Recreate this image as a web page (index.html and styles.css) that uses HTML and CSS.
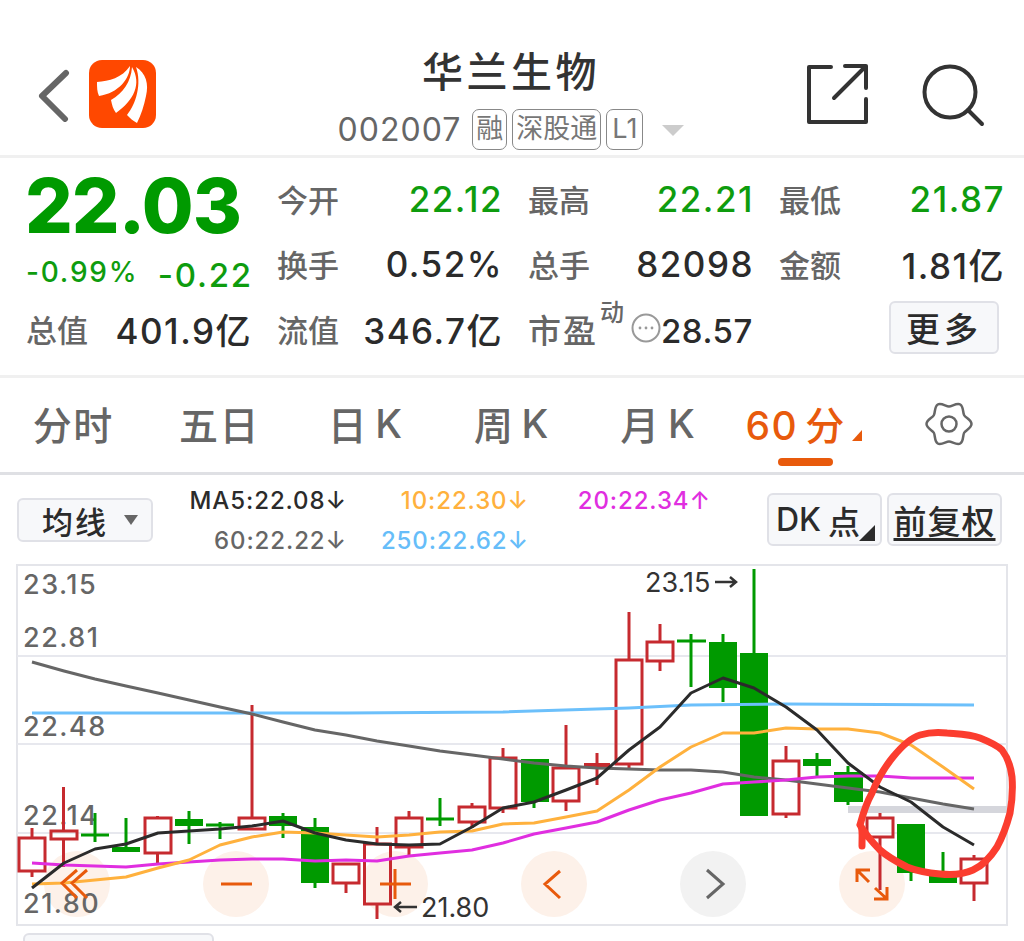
FILE: index.html
```html
<!DOCTYPE html>
<html lang="zh-CN">
<head>
<meta charset="utf-8">
<title>华兰生物</title>
<link rel="stylesheet" href="styles.css">
</head>
<body>
<div class="page">
  <header class="header">
    <svg class="back" viewBox="0 0 34 54" width="34" height="54"><path d="M28 5 4 28l23 23"/></svg>
    <svg class="logo" viewBox="0 0 67 68" width="67" height="68">
      <rect width="67" height="68" rx="13" fill="#ff4800"/>
      <path fill="#fff" d="M8 22C20 21 33 18 41 6 41 18 30 33 10 36 8 32 8 27 8 22Z"/>
      <path fill="#fff" d="M43 7C53 24 45 40 27 53 24 49 23 45 22 40 34 33 42 22 43 7Z"/>
      <path fill="#fff" d="M47 7C57 13 60 24 57 36 55 46 52 55 48 63 44 61 41 58 38 55 47 44 53 24 47 7Z"/>
    </svg>
    <div class="identity">
      <h1 class="name">华兰生物</h1>
      <div class="code-row">
        <span class="code">002007</span>
        <span class="badge">融</span>
        <span class="badge">深股通</span>
        <span class="badge badge-wide">L1</span>
        <span class="caret"></span>
      </div>
    </div>
    <svg class="share" viewBox="0 0 64 64" width="64" height="64"><path d="M25 4H3v55h57V36M28 35 60 3M39 3h21v22"/></svg>
    <svg class="search" viewBox="0 0 64 64" width="64" height="64"><circle cx="29" cy="29" r="25.500"/><path d="m47 47 14 14"/></svg>
  </header>

  <section class="quote">
    <div class="price-cell">
      <div class="price">22.03</div>
      <div class="change"><span class="pct">-0.99%</span><span class="abs">-0.22</span></div>
    </div>
    <div class="stat"><span class="k">今开</span><span class="v down">22.12</span></div>
    <div class="stat"><span class="k">最高</span><span class="v down">22.21</span></div>
    <div class="stat"><span class="k">最低</span><span class="v down">21.87</span></div>
    <div class="stat"><span class="k">换手</span><span class="v">0.52%</span></div>
    <div class="stat"><span class="k">总手</span><span class="v">82098</span></div>
    <div class="stat"><span class="k">金额</span><span class="v">1.81亿</span></div>
    <div class="stat"><span class="k">总值</span><span class="v">401.9亿</span></div>
    <div class="stat"><span class="k">流值</span><span class="v">346.7亿</span></div>
    <div class="stat"><span class="k pe">市盈<sup class="sup">动</sup><svg class="dots" viewBox="0 0 30 30" width="30" height="30"><circle cx="15" cy="15" r="13.500" fill="none" stroke="#999" stroke-width="2"/><circle cx="9" cy="15" r="1.400" fill="#999"/><circle cx="15" cy="15" r="1.400" fill="#999"/><circle cx="21" cy="15" r="1.400" fill="#999"/></svg></span><span class="v v-tight">28.57</span></div>
    <div class="stat more-cell"><button class="more">更多</button></div>
  </section>

  <nav class="tabs">
    <div class="tab">分时</div>
    <div class="tab">五日</div>
    <div class="tab">日<i class="gap"></i>K</div>
    <div class="tab">周<i class="gap"></i>K</div>
    <div class="tab">月<i class="gap"></i>K</div>
    <div class="tab active"><span>60<i class="gap"></i>分</span><i class="corner"></i><b class="underline"></b></div>
    <div class="tab tab-gear">
      <svg class="gear" viewBox="-1 -1 50 50" width="50" height="50"><path d="M46.500 24C46.500 20 40.660 17.850 39.160 15.250 37.660 12.650 38.710 6.510 35.250 4.510 31.790 2.510 27 6.500 24 6.500 21 6.500 16.210 2.510 12.750 4.510 9.290 6.510 10.340 12.650 8.840 15.250 7.340 17.850 1.500 20 1.500 24 1.500 28 7.340 30.150 8.840 32.750 10.340 35.350 9.290 41.490 12.750 43.490 16.210 45.490 21 41.500 24 41.500 27 41.500 31.790 45.490 35.250 43.490 38.710 41.490 37.660 35.350 39.160 32.750 40.660 30.150 46.500 28 46.500 24Z"/><circle cx="24" cy="24" r="7.500"/></svg>
    </div>
  </nav>

  <section class="indicators">
    <button class="select"><span>均线</span><i class="select-caret"></i></button>
    <div class="ma-grid">
      <span class="ma black">MA5:22.08↓</span>
      <span class="ma yellow">10:22.30↓</span>
      <span class="ma magenta">20:22.34↑</span>
      <span class="ma grey">60:22.22↓</span>
      <span class="ma blue">250:22.62↓</span>
    </div>
    <div class="actions">
      <button class="action dk">DK<i class="gap"></i>点<i class="action-corner"></i></button>
      <button class="action"><u>前复权</u></button>
    </div>
  </section>

  <svg class="chart" viewBox="16 564 992 362" width="992" height="362">
    <rect class="frame" x="17" y="565" width="990" height="360"/>
    <path class="grid" d="M17 656H1007M17 744H1007M17 833H1007"/>
    <g class="pads">
      <circle cx="77" cy="884" r="33"/><circle cx="236" cy="884" r="33"/><circle cx="395" cy="884" r="33"/><circle cx="554" cy="884" r="33"/><circle cx="872" cy="884" r="33"/>
    </g>
    <circle class="pad-grey" cx="713" cy="884" r="33"/>
    <g class="axis">
      <text x="23" y="594">23.15</text><text x="23" y="647">22.81</text><text x="23" y="736">22.48</text><text x="23" y="825">22.14</text><text x="23" y="913">21.80</text>
    </g>
    <g class="up">
      <path d="M32 828V838M32 871V877M63.500 787V831M63.500 839V867M157.500 816V818M157.500 853V863M252 705V818M346 883V893M377 827V844M377 904V919M409 811V818M409 847V857M472 803V807M472 822V828M503 748V758M503 808V813M566 725V768M566 801V811M597 753V785M629 612V660M629 764V768M660 624V642M660 661V671M786 746V761M786 814V818M880 813V818M880 837V890M974 855V859M974 883V901"/>
      <rect x="19" y="838" width="26" height="33"/><rect x="51" y="831" width="26" height="8"/><rect x="145" y="818" width="26" height="35"/><rect x="239" y="818" width="26" height="11"/><rect x="333" y="864" width="26" height="19"/><rect x="364.500" y="844" width="26" height="60"/><rect x="396" y="818" width="26" height="29"/><rect x="459" y="807" width="26" height="15"/><rect x="490" y="758" width="26" height="50"/><rect x="553" y="768" width="26" height="33"/><rect x="616" y="660" width="26" height="104"/><rect x="647" y="642" width="26" height="19"/><rect x="773" y="761" width="26" height="53"/><rect x="867" y="818" width="26" height="19"/><rect x="961" y="859" width="26" height="24"/>
      <rect class="solid" x="584" y="763" width="26" height="5"/>
    </g>
    <g class="dn">
      <path d="M95 813V842M81 835H109M126 818V850M189 811V844M206 825H234M220 822V839M283 813V838M315 818V888M440 798V826M426 819H454M534 802V808M691 634V687M677 641H706M723 634V702M754 569V653M817 753V776M848 766V805M911 873V881M943 852V871"/>
      <rect class="solid" x="112" y="847" width="28" height="5"/><rect class="solid" x="175" y="819" width="28" height="7"/><rect class="solid" x="269" y="816" width="28" height="10"/><rect class="solid" x="301" y="827" width="28" height="56"/><rect class="solid" x="521" y="759" width="28" height="43"/><rect class="solid" x="709" y="642" width="28" height="46"/><rect class="solid" x="740" y="653" width="28" height="163"/><rect class="solid" x="803" y="759" width="28" height="7"/><rect class="solid" x="834" y="772" width="29" height="30"/><rect class="solid" x="897" y="824" width="28" height="49"/><rect class="solid" x="929" y="871" width="28" height="12"/>
    </g>
    <rect class="band" x="848" y="806" width="159" height="7"/>
    <path class="line l-blue" d="M32 713H346L503 712 629 708 691 705 786 704 974 705"/>
    <path class="line l-grey" d="M32 662 64 671 95 679 126 686 158 693 189 700 220 707 252 714 283 722 315 730 346 735 377 741 409 746 440 751 472 755 503 759 534 763 566 766 597 768 629 769 660 770 691 770 723 772 754 777 786 780 817 784 848 788 880 792 911 798 943 804 974 809"/>
    <path class="line l-magenta" d="M32 863 64 865 95 866 126 867 158 864 189 862 220 860 252 859 283 859 315 861 346 860 377 861 409 856 440 853 472 850 503 843 534 834 566 828 597 822 629 810 660 800 691 793 723 784 754 782 786 780 817 777 848 776 880 776 911 778 943 778 974 778"/>
    <path class="line l-yellow" d="M32 884 64 883 95 880 126 877 158 868 189 860 220 845 252 837 283 832 315 833 346 835 377 837 409 835 440 832 472 831 503 824 534 823 566 817 597 811 629 790 660 767 691 747 723 733 754 733 786 728 817 729 848 729 880 733 911 745 943 767 974 789"/>
    <path class="line l-black" d="M32 888 64 863 95 849 126 844 158 833 189 831 220 829 252 826 283 821 315 833 346 840 377 844 409 845 440 844 472 827 503 808 534 802 566 790 597 778 629 750 660 727 691 693 723 678 754 688 786 707 817 730 848 763 880 787 911 802 943 827 974 845"/>
    <text class="mark" x="645" y="592">23.15</text>
    <path class="mark-arrow" d="M715 582H736M730 577l6 5-6 5"/>
    <path class="mark-arrow" d="M395 907H417M401 902l-6 5 6 5"/>
    <text class="mark" x="421" y="917">21.80</text>
    <g class="glyph">
      <path d="M77 870 62 883 77 898M87 870 72 883 87 898M221 884H252M380 884H411M395 869V899M560 871 545 884 560 898M869 882 857 870M857 882V870H870M875 888 887 899M887 887V899H874"/>
    </g>
    <path class="glyph-grey" d="M707 870 723 884 707 898"/>
    <path class="loop" d="M862 846C862 832 863 828 860 825 864 810 868 800 872 793 878 778 884 768 893 757 902 746 910 738 920 735 930 732 938 732 947 733 960 734 970 734 980 738 990 742 997 745 1002 750 1008 758 1011 768 1012 777 1013 790 1012 802 1010 813 1006 828 1002 838 997 847 990 858 982 866 973 870 962 875 950 875 940 874 928 873 917 871 907 867 897 862 888 857 880 850 872 842 866 835 860 825"/>
  </svg>

  <div class="stub"></div>
</div>
</body>
</html>
```

FILE: styles.css
```css
* { box-sizing: border-box; }
html, body { margin: 0; padding: 0; background: #fff; }
body { font-family: Inter, "Noto Sans CJK SC", sans-serif; color: #2b2b2b; }
.page { width: 1024px; height: 941px; overflow: hidden; }
button { font-family: inherit; padding: 0; margin: 0; }
i { font-style: normal; }
.gap { display: inline-block; width: 7px; }

/* header */
.header { height: 155px; padding: 46px 0 0; display: grid; grid-template-columns: 38px 34px 17px 67px 1fr 64px 54px 64px 40px; align-items: start; }
.back { grid-column: 2; margin-top: 22px; fill: none; stroke: #666; stroke-width: 6; stroke-linecap: round; stroke-linejoin: round; }
.logo { grid-column: 4; margin-top: 14px; }
.identity { grid-column: 5; display: flex; flex-direction: column; align-items: center; margin-left: 64px; }
.name { margin: 0; font-size: 41px; line-height: 52px; font-weight: 500; letter-spacing: 3.500px; color: #333; }
.code-row { display: flex; align-items: center; gap: 5px; margin-top: 10px; height: 42px; }
.code { font-size: 32px; color: #666; letter-spacing: 1px; margin-right: 6px; }
.badge { height: 41px; padding: 0 3px; border: 1.500px solid #888; border-radius: 7px; font-size: 27px; line-height: 37px; color: #777; }
.badge-wide { padding: 0 5px; }
.caret { width: 0; height: 0; margin-left: 14px; margin-top: 2px; border-left: 11px solid transparent; border-right: 11px solid transparent; border-top: 11px solid #ccc; }
.share { grid-column: 6; margin-top: 17px; margin-left: 4px; fill: none; stroke: #333; stroke-width: 4; stroke-linejoin: round; stroke-linecap: round; }
.search { grid-column: 8; margin-top: 17px; margin-left: 1px; fill: none; stroke: #333; stroke-width: 4; stroke-linecap: round; }

/* quote */
.quote { height: 223px; border-top: 3px solid #f0f0f0; border-bottom: 3px solid #f0f0f0; padding: 8px 0 0 26px; display: grid; grid-template-columns: repeat(4, 224px); grid-template-rows: repeat(3, 65px); column-gap: 27px; }
.price-cell { grid-row: 1 / span 2; grid-column: 1; }
.price { font-size: 75px; line-height: 74px; font-weight: 800; color: #009a00; margin: 3px 0 0 -1px; letter-spacing: -1px; }
.change { display: flex; justify-content: space-between; align-items: flex-end; margin-top: 9px; color: #0e9c0e; }
.pct { font-size: 28px; line-height: 40px; padding-bottom: 5px; letter-spacing: 1.800px; font-weight: 500; }
.abs { font-size: 33px; line-height: 44px; letter-spacing: 1.800px; font-weight: 500; margin-right: -3px; }
.stat { display: flex; justify-content: space-between; align-items: center; }
.stat:nth-child(n+2) { white-space: nowrap; }
.k { font-size: 31px; color: #666; font-weight: 500; }
.v { font-size: 35px; color: #2b2b2b; font-weight: 500; letter-spacing: 1.500px; margin-right: -2px; }
.v.down { color: #0e9c0e; }
.v.v-tight { font-size: 33px; letter-spacing: 0.500px; margin: 5px 0 0; }
.stat:nth-child(2) { grid-column: 2; grid-row: 1; }
.stat:nth-child(3) { grid-column: 3; grid-row: 1; }
.stat:nth-child(4) { grid-column: 4; grid-row: 1; }
.stat:nth-child(5) { grid-column: 2; grid-row: 2; }
.stat:nth-child(6) { grid-column: 3; grid-row: 2; }
.stat:nth-child(7) { grid-column: 4; grid-row: 2; }
.stat:nth-child(8) { grid-column: 1; grid-row: 3; }
.stat:nth-child(9) { grid-column: 2; grid-row: 3; }
.stat:nth-child(10) { grid-column: 3; grid-row: 3; }
.more-cell { grid-column: 4; grid-row: 3; justify-content: flex-end; padding-right: 4px; }
.pe { display: flex; align-items: flex-start; font-size: 33px; letter-spacing: 2px; }
.sup { font-size: 24px; line-height: 24px; margin-top: -4px; margin-left: 2px; letter-spacing: 0; }
.dots { margin-left: 7px; margin-top: 8px; }
.more { width: 110px; height: 53px; margin-top: -3px; background: #f7f8fa; border: 2px solid #e0e1e7; border-radius: 6px; font-size: 34px; letter-spacing: 4px; font-weight: 500; color: #2b2b2b; }

/* tabs */
.tabs { height: 97px; border-bottom: 3px solid #dfe0e4; display: grid; grid-template-columns: repeat(7, 1fr); align-items: center; }
.tab { position: relative; height: 94px; padding-bottom: 4px; display: flex; align-items: center; justify-content: center; font-size: 39px; font-weight: 500; color: #666; letter-spacing: 1.500px; }
.tab.active { color: #e85a0c; padding-right: 2px; }
.tab-gear { padding-right: 3px; padding-bottom: 2px; }
.corner { width: 0; height: 0; margin-left: 6px; margin-top: 24px; border-left: 10px solid transparent; border-bottom: 11px solid #e85a0c; }
.underline { position: absolute; left: 50%; bottom: 6px; width: 55px; height: 8px; margin-left: -27px; background: #e85a0c; border-radius: 4px; }
.gear { fill: none; stroke: #666; stroke-width: 2.500; }

/* indicators */
.indicators { height: 89px; display: grid; grid-template-columns: 136px 557px 1fr; padding: 18px 0 0 17px; }
.select { width: 136px; height: 44px; margin-top: 5px; background: #f7f8fa; border: 2px solid #e0e1e7; border-radius: 6px; display: flex; align-items: center; padding-left: 23px; font-size: 31px; font-weight: 500; letter-spacing: 2px; color: #2b2b2b; }
.select-caret { width: 0; height: 0; margin-left: 16px; border-left: 7px solid transparent; border-right: 7px solid transparent; border-top: 10px solid #666; }
.ma-grid { display: grid; grid-template-columns: repeat(3, 182px); grid-auto-rows: 40px; justify-content: start; margin-top: -12px; padding-left: 12px; }
.ma { font-size: 24px; line-height: 40px; text-align: right; white-space: nowrap; letter-spacing: 0.900px; font-weight: 500; }
.black { color: #2b2b2b; }
.yellow { color: #ffb13d; }
.magenta { color: #e02ee0; }
.grey { color: #666; }
.blue { color: #66bdf9; }
.actions { display: flex; gap: 5px; margin-left: 57px; align-items: flex-start; }
.action { position: relative; flex: none; width: 115px; height: 53px; background: #f7f8fa; border: 2px solid #e0e1e7; border-radius: 6px; font-size: 33px; font-weight: 500; color: #2b2b2b; white-space: nowrap; display: flex; align-items: center; justify-content: center; }
.action.dk { justify-content: flex-start; padding-left: 7px; font-size: 32px; }
.action u { letter-spacing: 1px; text-underline-offset: 4px; }
.action-corner { position: absolute; right: 5px; bottom: 3px; width: 0; height: 0; border-left: 16px solid transparent; border-bottom: 16px solid #2b2b2b; }

/* chart */
.chart { display: block; margin-left: 16px; overflow: visible; }
.frame { fill: #fff; stroke: #e4e5ea; stroke-width: 2; }
.grid { fill: none; stroke: #e7e8ee; stroke-width: 2; }
.pads circle { fill: #fdf1e9; }
.pad-grey { fill: #f2f2f2; }
.axis text { font-size: 27px; fill: #666; letter-spacing: 1.500px; font-weight: 500; }
.up { fill: none; stroke: #c62a2f; stroke-width: 3; }
.up .solid { fill: #c62a2f; stroke: none; }
.dn { fill: none; stroke: #009a00; stroke-width: 3; }
.dn .solid { fill: #009a00; stroke: none; }
.band { fill: #d5d6dc; }
.line { fill: none; stroke-width: 3; stroke-linejoin: round; }
.l-blue { stroke: #6cc0fb; }
.l-grey { stroke: #666; }
.l-magenta { stroke: #e02ee0; }
.l-yellow { stroke: #ffb13d; }
.l-black { stroke: #2b2b2b; }
.mark { font-size: 27px; fill: #333; }
.mark-arrow { fill: none; stroke: #333; stroke-width: 2.500; }
.glyph { fill: none; stroke: #e85a0c; stroke-width: 3; }
.glyph-grey { fill: none; stroke: #666; stroke-width: 3; }
.loop { fill: none; stroke: #fb3d2f; stroke-width: 7; stroke-linejoin: round; stroke-linecap: round; }

.stub { width: 191px; height: 20px; margin: 7px 0 0 23px; background: #f7f8fa; border: 2px solid #e0e1e7; border-radius: 6px 6px 0 0; }
```
